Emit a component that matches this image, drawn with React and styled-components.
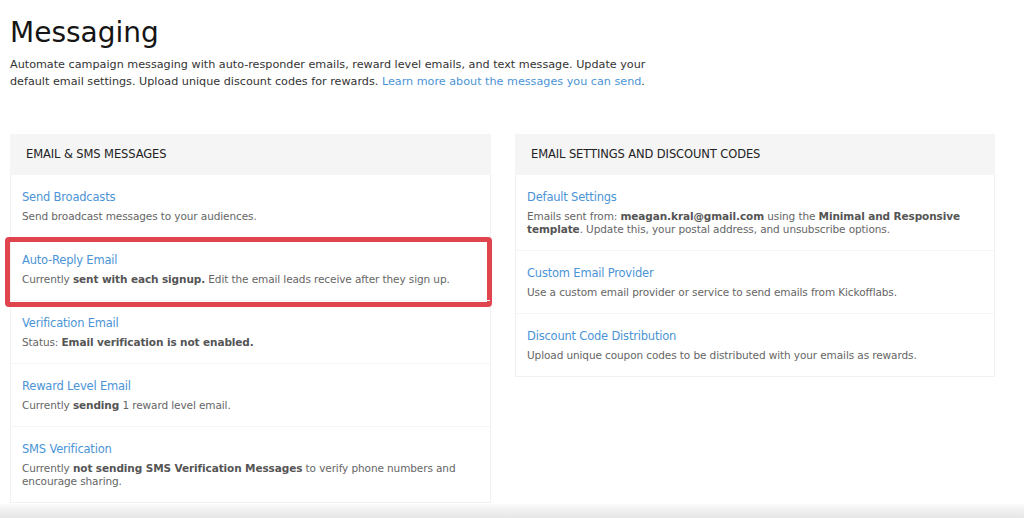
import React from 'react'
import styled, { createGlobalStyle } from 'styled-components'

const GlobalStyle = createGlobalStyle`
  html, body {
    margin: 0;
    padding: 0;
    background: #fff;
  }
  body {
    font-family: "DejaVu Sans", Verdana, sans-serif;
    color: #333;
  }
  * {
    box-sizing: border-box;
  }
`

const emailItems = [
  {
    title: 'Send Broadcasts',
    desc: <>Send broadcast messages to your audiences.</>,
  },
  {
    title: 'Auto-Reply Email',
    desc: <>Currently <b>sent with each signup.</b> Edit the email leads receive after they sign up.</>,
    highlight: true,
  },
  {
    title: 'Verification Email',
    desc: <>Status: <b>Email verification is not enabled.</b></>,
  },
  {
    title: 'Reward Level Email',
    desc: <>Currently <b>sending</b> 1 reward level email.</>,
  },
  {
    title: 'SMS Verification',
    desc: <>Currently <b>not sending SMS Verification Messages</b> to verify phone numbers and encourage sharing.</>,
  },
]

const settingsItems = [
  {
    title: 'Default Settings',
    desc: <>Emails sent from: <b>meagan.kral@gmail.com</b> using the <b>Minimal and Responsive template</b>. Update this, your postal address, and unsubscribe options.</>,
  },
  {
    title: 'Custom Email Provider',
    desc: <>Use a custom email provider or service to send emails from Kickofflabs.</>,
  },
  {
    title: 'Discount Code Distribution',
    desc: <>Upload unique coupon codes to be distributed with your emails as rewards.</>,
  },
]

const Panel = ({ heading, items }) => (
  <Card>
    <CardHeader>{heading}</CardHeader>
    {items.map((item) => (
      <Item key={item.title} $highlight={item.highlight}>
        <ItemTitle href="#">{item.title}</ItemTitle>
        <ItemDesc>{item.desc}</ItemDesc>
      </Item>
    ))}
  </Card>
)

const App = () => {
  return (
    <Page>
      <GlobalStyle />
      <Content>
        <Title>Messaging</Title>
        <Intro>
          Automate campaign messaging with auto-responder emails, reward level emails, and text message. Update your
          default email settings. Upload unique discount codes for rewards.{' '}
          <a href="#">Learn more about the messages you can send</a>.
        </Intro>
        <Columns>
          <Panel heading="Email & SMS Messages" items={emailItems} />
          <Panel heading="Email Settings and Discount Codes" items={settingsItems} />
        </Columns>
      </Content>
      <BottomShade />
    </Page>
  )
}

const Page = styled.div`
  width: 1024px;
  height: 518px;
  overflow: hidden;
  display: flex;
  flex-direction: column;
`

const Content = styled.div`
  flex: 1;
  min-height: 0;
  padding: 0 10px;
`

const Title = styled.h1`
  margin: 0;
  padding-top: 16px;
  font-size: 28px;
  line-height: 34px;
  font-weight: 400;
  color: #151515;
`

const Intro = styled.p`
  margin: 6px 0 0;
  width: 670px;
  font-size: 11.2px;
  line-height: 17px;
  color: #333;

  a {
    color: #4b94d6;
    text-decoration: none;
  }
`

const Columns = styled.div`
  display: grid;
  grid-template-columns: 481px 480px;
  gap: 24px;
  align-items: start;
  margin-top: 44px;
`

const Card = styled.div`
  border: 1px solid #f1f1f1;
  background: #fff;
`

const CardHeader = styled.div`
  height: 40px;
  display: flex;
  align-items: center;
  padding: 0 16px;
  margin: -1px -1px 0;
  background: #f5f5f5;
  font-size: 11.5px;
  letter-spacing: -0.1px;
  text-transform: uppercase;
  color: #222;
`

const Item = styled.div`
  position: relative;
  padding: 14px 11px 14px;
  border-top: 1px solid #f6f6f6;

  &:first-of-type {
    border-top: none;
  }

  ${({ $highlight }) =>
    $highlight &&
    `
    &::after {
      content: "";
      position: absolute;
      left: -6px;
      right: -2px;
      top: -1px;
      bottom: -7px;
      border: 5px solid #e0444e;
      border-radius: 4px;
    }
  `}
`

const ItemTitle = styled.a`
  display: block;
  font-size: 11.5px;
  letter-spacing: -0.2px;
  line-height: 17px;
  color: #4b94d6;
  text-decoration: none;
`

const ItemDesc = styled.div`
  margin-top: 4px;
  font-size: 10.5px;
  letter-spacing: -0.1px;
  line-height: 13px;
  color: #666;

  b {
    color: #555;
    font-weight: 700;
  }
`

const BottomShade = styled.div`
  height: 14px;
  flex-shrink: 0;
  background: linear-gradient(#fafafa, #e6e6e6);
`

export default App
